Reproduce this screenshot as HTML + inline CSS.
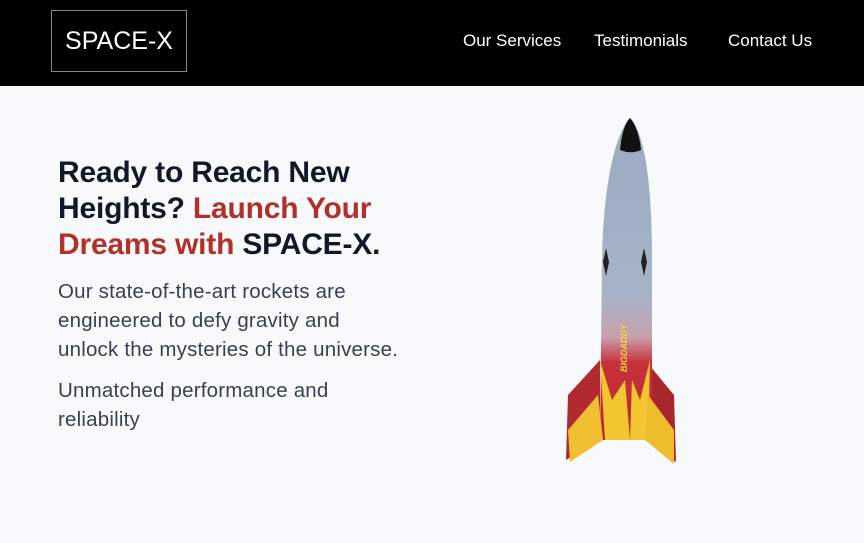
<!DOCTYPE html>
<html><head><style>
body{margin:0;width:864px;height:543px;background:#f8f9fb;font-family:"Liberation Sans",sans-serif;position:relative;overflow:hidden}
header{position:absolute;left:0;top:0;width:864px;height:86px;background:#000}
.logo{position:absolute;left:51px;top:10px;width:134px;height:60px;border:1px solid #888;color:#fff;font-size:25px;line-height:60px;text-align:center}
nav a{position:absolute;top:31px;color:#fff;font-size:17px;text-decoration:none}
h1{position:absolute;left:58px;top:155px;margin:0;font-size:30px;line-height:36px;color:#111827;font-weight:bold;white-space:nowrap;letter-spacing:-0.2px}
.r{color:#b0302a}
p{position:absolute;left:58px;margin:0;font-size:20.5px;line-height:29px;color:#374151;white-space:nowrap;letter-spacing:0.2px}
</style></head><body>
<header><div class="logo">SPACE-X</div>
<nav><a style="left:463px">Our Services</a><a style="left:594px">Testimonials</a><a style="left:728px">Contact Us</a></nav></header>
<h1>Ready to Reach New<br>Heights? <span class="r">Launch Your<br>Dreams with</span> SPACE-X.</h1>
<p style="top:277px">Our state-of-the-art rockets are<br>engineered to defy gravity and<br>unlock the mysteries of the universe.</p>
<p style="top:376px">Unmatched performance and<br>reliability</p>
<svg style="position:absolute;left:540px;top:110px" width="170" height="370" viewBox="540 110 170 370">
<defs><linearGradient id="g" x1="0" y1="0" x2="0" y2="1">
<stop offset="0" stop-color="#9aaac0"/><stop offset="0.55" stop-color="#a7b4c8"/><stop offset="0.68" stop-color="#c8a0ac"/><stop offset="0.76" stop-color="#c8323a"/><stop offset="1" stop-color="#b52a30"/></linearGradient></defs>
<path d="M566 460 L568 395 L600 360 L600 440 Z" fill="#b02a30"/>
<path d="M676 462 L674 395 L645 360 L645 440 Z" fill="#a8262c"/>
<path d="M630 118 C614 135 603 190 602 260 L600 440 L652 440 L652 260 C652 190 646 135 630 118Z" fill="url(#g)"/>
<path d="M630 118 C624 124 621 138 620 150 C628 153 634 153 641 150 C640 138 636 124 630 118Z" fill="#111"/>
<path d="M600 360 L612 400 L625 380 L630 440 L605 440Z" fill="#f2c531"/>
<path d="M650 360 L640 400 L632 380 L630 440 L648 440Z" fill="#f2c531"/>
<path d="M568 430 L598 395 L603 440 L570 462Z" fill="#f0c030"/>
<path d="M674 430 L648 395 L645 440 L674 464Z" fill="#eebd2c"/>
<path d="M606 248 L609 262 L606 276 L603 262Z" fill="#222"/>
<path d="M644 248 L647 262 L644 276 L641 262Z" fill="#222"/>
<text x="0" y="0" transform="translate(627,372) rotate(-90)" font-size="9" font-weight="bold" font-style="italic" fill="#f2d23a">BIGDADDY</text>
</svg>
</body></html>
